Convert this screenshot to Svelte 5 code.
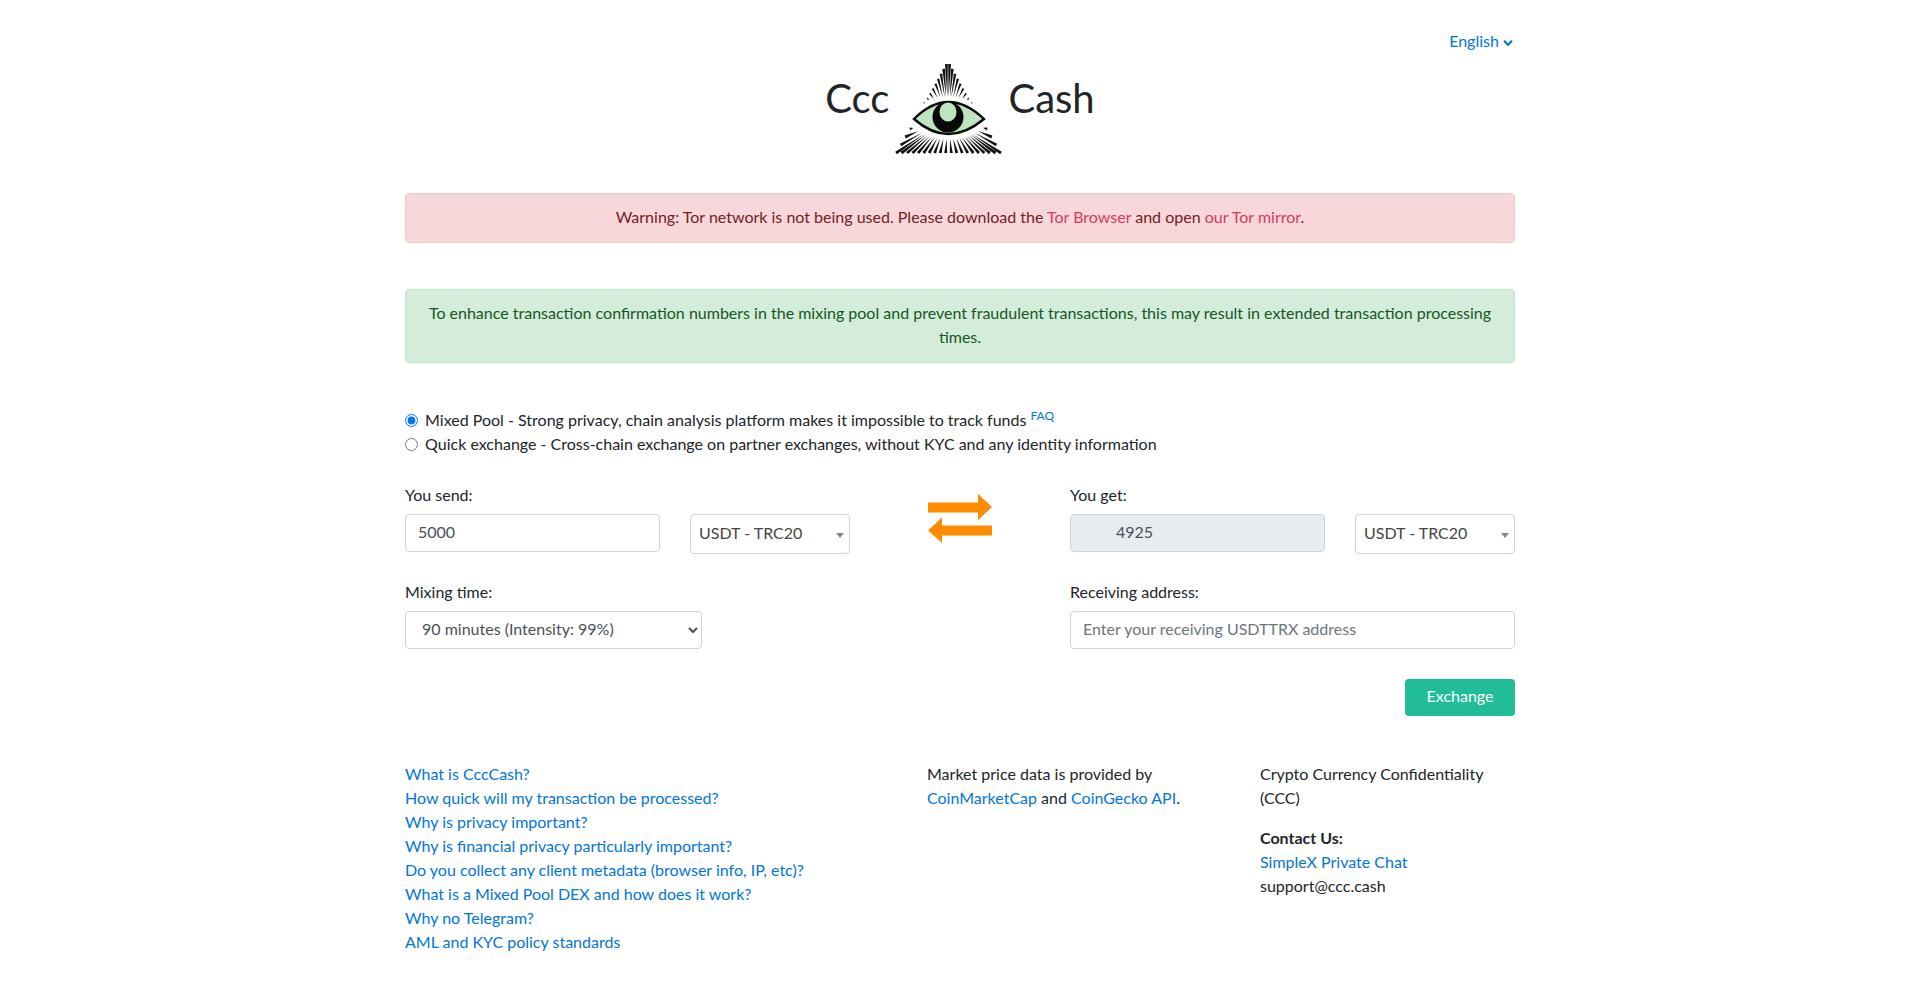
<script>
  const cx = 948
  const cy = 117

  // one tapered spoke, wide on the triangle outline, pointed towards the eye
  const ray = (x, y, w, gap) => {
    const len = Math.hypot(x - cx, y - cy)
    const dx = (x - cx) / len
    const dy = (y - cy) / len
    const inner = 1 / Math.sqrt((dx / 35) ** 2 + (dy / 15) ** 2) + gap
    const x1 = cx + dx * inner
    const y1 = cy + dy * inner
    const px = (-dy * w) / 2
    const py = (dx * w) / 2
    return `M${x1.toFixed(1)} ${y1.toFixed(1)}L${(x + px).toFixed(1)} ${(y + py).toFixed(1)}L${(x - px).toFixed(1)} ${(y - py).toFixed(1)}Z`
  }

  const rays = []
  // upper fan, ends spaced along the two sides
  rays.push(ray(946.4, 63, 2.8, 6))
  rays.push(ray(949.6, 63, 2.8, 6))
  for (let i = 1; i <= 8; i++) {
    const y = 63 + i * 4.9
    const off = 1.6 + (y - 63) * 0.56
    const w = 2.8 - i * 0.14
    rays.push(ray(948 - off, y, w, 6))
    rays.push(ray(948 + off, y, w, 6))
  }
  // lower fan, ends spaced along the base
  for (let i = 0; i <= 19; i++) {
    rays.push(ray(896 + (i * 105) / 19, 152, 3, 6))
  }
  // the short spokes up the sides of the lower corners
  for (let i = 1; i <= 3; i++) {
    rays.push(ray(896 + i * 4.6, 152 - i * 8, 3, 6))
    rays.push(ray(1001 - i * 4.6, 152 - i * 8, 3, 6))
  }
  const raysPath = rays.join('')

  const faq = [
    'What is CccCash?',
    'How quick will my transaction be processed?',
    'Why is privacy important?',
    'Why is financial privacy particularly important?',
    'Do you collect any client metadata (browser info, IP, etc)?',
    'What is a Mixed Pool DEX and how does it work?',
    'Why no Telegram?',
    'AML and KYC policy standards'
  ]
</script>

<div class="container">
  <div class="lang">
    <a href="#lang">English
      <svg width="10" height="8" viewBox="0 0 10 8"><path d="M1 1.8 5 5.8l4-4" fill="none" stroke="#0275d8" stroke-width="2.2" /></svg>
    </a>
  </div>

  <div class="brand">
    <span>Ccc</span>
    <svg class="logo" width="107" height="92" viewBox="895 62 107 92">
      <defs>
        <clipPath id="eye"><path d="M914 118Q948 84 984 118Q948 148 914 118Z" /></clipPath>
      </defs>
      <path d={raysPath} fill="#111" />
      <path d="M914 118Q948 84 984 118Q948 148 914 118Z" fill="#bde5c0" stroke="#0a0a0a" stroke-width="2.4" />
      <g clip-path="url(#eye)">
        <circle cx="948" cy="116" r="15.5" fill="#0a0a0a" />
        <ellipse cx="948" cy="111" rx="8.5" ry="9.5" fill="#bde5c0" />
      </g>
    </svg>
    <span>Cash</span>
  </div>

  <div class="alert danger">
    Warning: Tor network is not being used. Please download the <a href="#tor">Tor Browser</a> and open <a href="#mirror">our Tor mirror</a>.
  </div>

  <div class="alert success">
    To enhance transaction confirmation numbers in the mixing pool and prevent fraudulent transactions, this may result in extended transaction processing times.
  </div>

  <div class="modes">
    <label><input type="radio" name="mode" checked /> Mixed Pool - Strong privacy, chain analysis platform makes it impossible to track funds <sup><a href="#faq">FAQ</a></sup></label>
    <label><input type="radio" name="mode" /> Quick exchange - Cross-chain exchange on partner exchanges, without KYC and any identity information</label>
  </div>

  <div class="exchange">
    <div class="side">
      <div class="field-label">You send:</div>
      <div class="pair">
        <input class="control amount" value="5000" />
        <div class="coin">USDT - TRC20<i></i></div>
      </div>
      <div class="field-label second">Mixing time:</div>
      <select class="control mixing">
        <option>90 minutes (Intensity: 99%)</option>
      </select>
    </div>

    <div class="swap">
      <svg width="64" height="49" viewBox="0 0 64 49">
        <path d="M0 8.5h50V0l14 13-14 13v-7.500H0z" fill="#ff8c00" />
        <path d="M64 31.500H14V23.500L0 36.500 14 49v-7.500h50z" fill="#ff8c00" />
      </svg>
    </div>

    <div class="side">
      <div class="field-label">You get:</div>
      <div class="pair">
        <input class="control amount got" value="4925" disabled />
        <div class="coin">USDT - TRC20<i></i></div>
      </div>
      <div class="field-label second">Receiving address:</div>
      <input class="control" placeholder="Enter your receiving USDTTRX address" />
      <div class="actions"><button>Exchange</button></div>
    </div>
  </div>

  <div class="footer">
    <ul>
      {#each faq as q}
        <li><a href="#q">{q}</a></li>
      {/each}
    </ul>
    <p>Market price data is provided by <a href="#cmc">CoinMarketCap</a> and <a href="#cg">CoinGecko API</a>.</p>
    <div>
      <p class="ccc">Crypto Currency Confidentiality (CCC)</p>
      <strong>Contact Us:</strong><br />
      <a href="#simplex">SimpleX Private Chat</a><br />
      support@ccc.cash
    </div>
  </div>
</div>

<style>
  :global(body) {
    margin: 0;
    background: #fff;
    color: #212529;
    font-family: Lato, 'Liberation Sans', sans-serif;
    font-size: 16px;
    line-height: 24px;
  }

  a {
    color: #0275d8;
    text-decoration: none;
  }

  .container {
    width: 1110px;
    margin: 0 auto;
    padding-top: 29px;
  }

  .lang {
    display: flex;
    justify-content: flex-end;
    padding-right: 2px;
  }

  .brand {
    display: flex;
    justify-content: center;
    align-items: center;
    margin-top: 9px;
    height: 93px;
    font-size: 40px;
    line-height: 48px;
  }

  .brand span {
    margin-top: -21px;
  }

  .logo {
    margin: 0 6px 0 6px;
  }

  .alert {
    padding: 11px 20px 13px;
    border: 1px solid transparent;
    border-radius: 4px;
    text-align: center;
    box-sizing: border-box;
  }

  .danger {
    margin-top: 38px;
    background: #f8d7da;
    border-color: #f5c6cb;
    color: #721c24;
  }

  .danger a {
    color: #d63a5e;
  }

  .success {
    margin-top: 46px;
    background: #d4edda;
    border-color: #c3e6cb;
    color: #155724;
  }

  .modes {
    margin-top: 45px;
  }

  .modes label {
    display: block;
  }

  .modes input {
    margin: 0 3px 0 0;
    vertical-align: -1px;
  }

  sup {
    font-size: 12px;
    line-height: 0;
  }

  .exchange {
    display: grid;
    grid-template-columns: 445px 220px 445px;
    margin-top: 27px;
  }

  .field-label {
    margin-bottom: 7px;
  }

  .second {
    margin-top: 26px;
  }

  .pair {
    display: flex;
    justify-content: space-between;
    align-items: flex-start;
    height: 40px;
  }

  .control {
    display: block;
    box-sizing: border-box;
    width: 100%;
    height: 38px;
    padding: 4px 12px 8px;
    border: 1px solid #ced4da;
    border-radius: 4px;
    background: #fff;
    color: #495057;
    font: 16px/24px Lato, 'Liberation Sans', sans-serif;
  }

  .control::placeholder {
    color: #6c757d;
  }

  .amount {
    width: 255px;
  }

  .got {
    background: #e9ecef;
    padding-left: 45px;
  }

  .mixing {
    width: 297px;
  }

  .coin {
    position: relative;
    box-sizing: border-box;
    width: 160px;
    height: 40px;
    padding: 6px 8px;
    border: 1px solid #ced4da;
    border-radius: 4px;
    color: #444;
  }

  .coin i {
    position: absolute;
    top: 18px;
    right: 5px;
    border-top: 5px solid #888;
    border-left: 4px solid transparent;
    border-right: 4px solid transparent;
  }

  .swap {
    display: flex;
    justify-content: center;
    align-items: flex-start;
    padding-top: 11px;
  }

  .actions {
    display: flex;
    justify-content: flex-end;
    margin-top: 30px;
  }

  button {
    height: 37px;
    width: 110px;
    padding: 0 0 3px;
    border: 0;
    border-radius: 4px;
    background: #20bd98;
    color: #fff;
    font: 16px/24px Lato, 'Liberation Sans', sans-serif;
  }

  .footer {
    display: grid;
    grid-template-columns: 522px 333px 255px;
    margin-top: 46px;
    padding-bottom: 16px;
  }

  .footer ul {
    list-style: none;
    margin: 0;
    padding: 0;
  }

  .footer p {
    margin: 0;
    padding-right: 15px;
  }

  .footer .ccc {
    margin-bottom: 16px;
    padding-right: 0;
  }
</style>
